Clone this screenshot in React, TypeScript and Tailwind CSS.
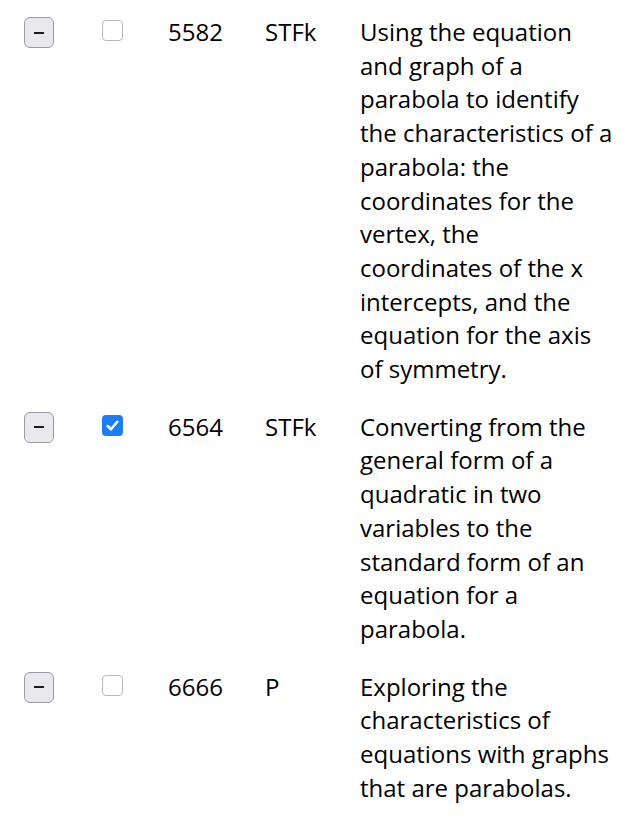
import React from "react";

const rows = [
  {
    id: "5582",
    type: "STFk",
    checked: false,
    text: "Using the equation and graph of a parabola to identify the characteristics of a parabola: the coordinates for the vertex, the coordinates of the x intercepts, and the equation for the axis of symmetry.",
  },
  {
    id: "6564",
    type: "STFk",
    checked: true,
    text: "Converting from the general form of a quadratic in two variables to the standard form of an equation for a parabola.",
  },
  {
    id: "6666",
    type: "P",
    checked: false,
    text: "Exploring the characteristics of equations with graphs that are parabolas.",
  },
];

export default function App() {
  return (
    <div className="bg-white w-[640px] min-h-[832px] pt-[3px] font-['Open_Sans',sans-serif] text-[24px] leading-[33.7px] text-black">
      {rows.map((r) => (
        <div key={r.id} className="flex items-start py-3">
          <div className="w-[102px] pl-[24px] pt-[2px] shrink-0">
            <button className="w-[30px] h-[31px] rounded-[6px] border border-[#9a9aa4] bg-[#e9e9ed] flex items-center justify-center">
              <span className="block w-[10px] h-[2px] bg-[#1a1a1a]" />
            </button>
          </div>
          <div className="w-[66px] pt-[5px] shrink-0">
            <span
              className={
                r.checked
                  ? "flex w-[21px] h-[21px] rounded-[4px] bg-[#1a7dfb] items-center justify-center"
                  : "block w-[21px] h-[21px] rounded-[4px] border border-[#b8b8bc] bg-white"
              }
            >
              {r.checked && (
                <svg width="15" height="15" viewBox="0 0 14 14">
                  <path d="M2.5 7.5 L5.6 10.5 L11.5 3.5" fill="none" stroke="white" strokeWidth="2.4" strokeLinecap="round" strokeLinejoin="round" />
                </svg>
              )}
            </span>
          </div>
          <div className="w-[97px] shrink-0">{r.id}</div>
          <div className="w-[95px] shrink-0">{r.type}</div>
          <div className="w-[256px]">{r.text}</div>
        </div>
      ))}
    </div>
  );
}
